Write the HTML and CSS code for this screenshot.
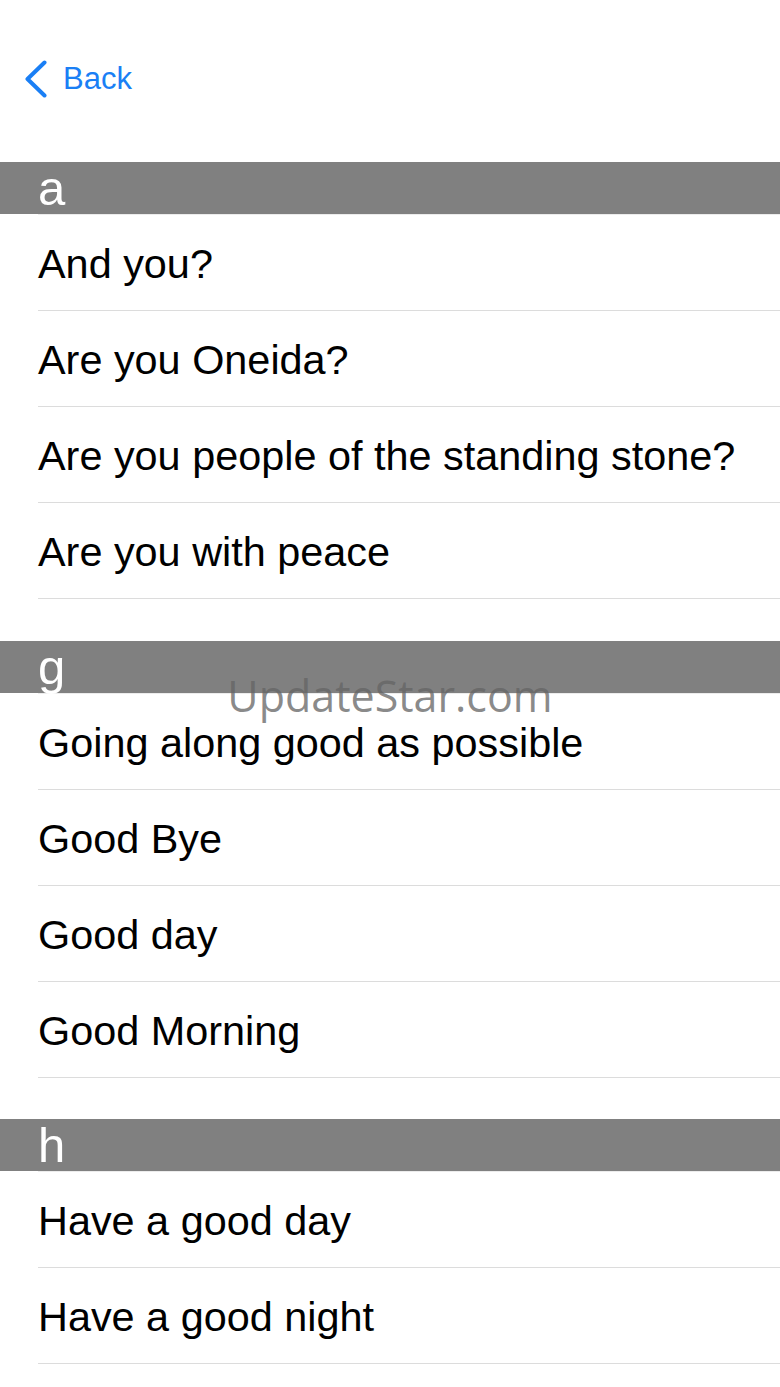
FILE: index.html
```html
<!DOCTYPE html>
<html lang="en">
<head>
  <meta charset="UTF-8">
  <meta name="viewport" content="width=device-width, initial-scale=1.0">
  <title>Phrases</title>
  <link rel="stylesheet" href="styles.css">
</head>
<body>
  <div class="screen">
    <nav class="navbar">
      <a class="back-link" href="#">
        <svg class="back-chevron" viewBox="0 0 24 38" width="24" height="38" aria-hidden="true">
          <path d="M20.5 2.5 L3.5 19 L20.5 35.5" />
        </svg>
        <span>Back</span>
      </a>
    </nav>

    <section class="group">
      <h2 class="group-title">a</h2>
      <ul class="phrase-list">
        <li class="phrase">And you?</li>
        <li class="phrase">Are you Oneida?</li>
        <li class="phrase">Are you people of the standing stone?</li>
        <li class="phrase">Are you with peace</li>
      </ul>
    </section>

    <section class="group">
      <h2 class="group-title">g</h2>
      <ul class="phrase-list">
        <li class="phrase">Going along good as possible</li>
        <li class="phrase">Good Bye</li>
        <li class="phrase">Good day</li>
        <li class="phrase">Good Morning</li>
      </ul>
    </section>

    <section class="group">
      <h2 class="group-title">h</h2>
      <ul class="phrase-list">
        <li class="phrase">Have a good day</li>
        <li class="phrase">Have a good night</li>
      </ul>
    </section>

    <!-- watermark sits over the list -->
    <div class="watermark">UpdateStar.com</div>
  </div>
</body>
</html>
```

FILE: styles.css
```css
* {
  box-sizing: border-box;
  margin: 0;
  padding: 0;
}

html, body {
  background: #ffffff;
}

body {
  font-family: "Liberation Sans", Arial, Helvetica, sans-serif;
  color: #000000;
}

.screen {
  position: relative;
  width: 780px;
  height: 1387px;
  overflow: hidden;
}

.navbar {
  height: 162px;
  padding-top: 60px;
}

.back-link {
  display: flex;
  align-items: center;
  gap: 15px;
  padding-left: 24px;
  height: 38px;
  color: #1a7ff5;
  text-decoration: none;
  font-size: 31px;
}

.back-chevron path {
  fill: none;
  stroke: #1a7ff5;
  stroke-width: 4;
  stroke-linecap: round;
  stroke-linejoin: round;
}

.group + .group {
  margin-top: 41.5px;
}

.group-title {
  height: 52px;
  line-height: 52px;
  padding-left: 38px;
  background: #808080;
  color: #ffffff;
  font-size: 49px;
  font-weight: normal;
}

.phrase-list {
  list-style: none;
  margin-left: 38px;
  border-top: 1px solid #ececec;
}

.phrase {
  height: 96px;
  padding-top: 4px;
  line-height: 90px;
  font-size: 41.4px;
  border-bottom: 1px solid #dcdcdc;
  white-space: nowrap;
}

.watermark {
  position: absolute;
  top: 674px;
  left: 0;
  right: 0;
  text-align: center;
  font-family: "Open Sans", sans-serif;
  font-size: 43px;
  line-height: 44px;
  color: rgba(100, 100, 100, 0.75);
  pointer-events: none;
}
```
